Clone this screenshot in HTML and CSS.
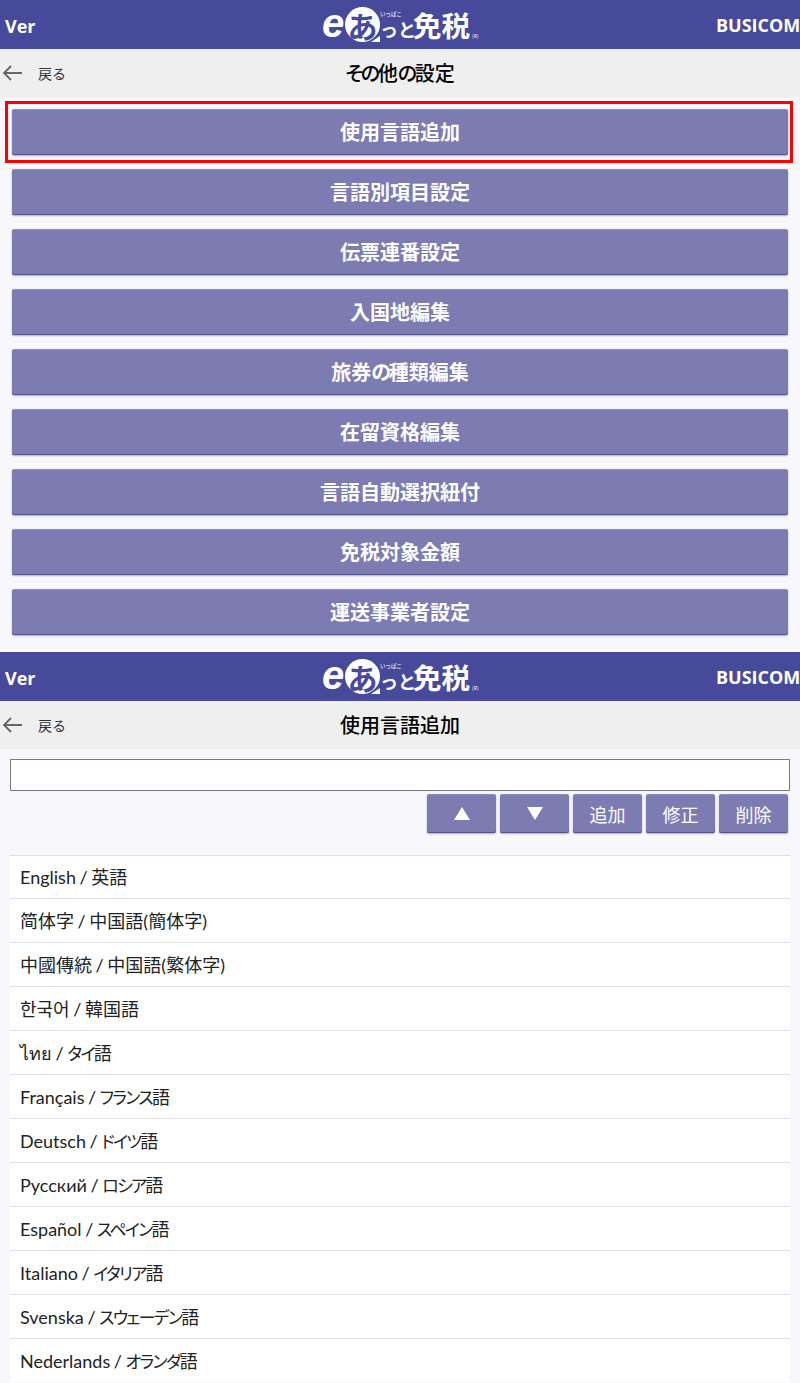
FILE: index.html
```html
<!DOCTYPE html>
<html lang="ja">
<head>
    <meta charset="UTF-8">
    <meta name="viewport" content="width=device-width, initial-scale=1.0">
    <title>その他の設定</title>
    <link rel="stylesheet" href="styles.css">
</head>
<body>

<!-- その他の設定 -->
<section class="screen screen-menu">
    <header class="app-header">
        <span class="ver">Ver</span>
        <div class="logo">
            <span class="logo-e">e</span>
            <span class="logo-bubble">あ</span>
            <span class="logo-small">いっぱこ</span>
            <span class="logo-rest">っと</span>
            <span class="logo-main">免税</span>
            <span class="logo-mark">(R)</span>
        </div>
        <span class="brand">BUSICOM</span>
    </header>
    <div class="sub-header">
        <a class="back" href="#">
            <svg class="back-icon" width="20" height="16" viewBox="0 0 20 16"><path d="M9 1 2 8l7 7M2 8h18" fill="none" stroke="#666" stroke-width="1.8"/></svg>
            <span>戻る</span>
        </a>
        <h1 class="page-title"><span class="kana">その</span>他<span class="kana">の</span>設定</h1>
    </div>
    <div class="menu">
        <div class="menu-item selected"><button class="menu-btn">使用言語追加</button></div>
        <div class="menu-item"><button class="menu-btn">言語別項目設定</button></div>
        <div class="menu-item"><button class="menu-btn">伝票連番設定</button></div>
        <div class="menu-item"><button class="menu-btn">入国地編集</button></div>
        <div class="menu-item"><button class="menu-btn">旅券<span class="kana">の</span>種類編集</button></div>
        <div class="menu-item"><button class="menu-btn">在留資格編集</button></div>
        <div class="menu-item"><button class="menu-btn">言語自動選択紐付</button></div>
        <div class="menu-item"><button class="menu-btn">免税対象金額</button></div>
        <div class="menu-item"><button class="menu-btn">運送事業者設定</button></div>
    </div>
</section>

<!-- 使用言語追加 -->
<section class="screen">
    <header class="app-header">
        <span class="ver">Ver</span>
        <div class="logo">
            <span class="logo-e">e</span>
            <span class="logo-bubble">あ</span>
            <span class="logo-small">いっぱこ</span>
            <span class="logo-rest">っと</span>
            <span class="logo-main">免税</span>
            <span class="logo-mark">(R)</span>
        </div>
        <span class="brand">BUSICOM</span>
    </header>
    <div class="sub-header">
        <a class="back" href="#">
            <svg class="back-icon" width="20" height="16" viewBox="0 0 20 16"><path d="M9 1 2 8l7 7M2 8h18" fill="none" stroke="#666" stroke-width="1.8"/></svg>
            <span>戻る</span>
        </a>
        <h1 class="page-title">使用言語追加</h1>
    </div>
    <div class="editor">
        <input class="lang-input" type="text">
        <div class="tools">
            <button class="tool-btn"><span class="tri-up"></span></button>
            <button class="tool-btn"><span class="tri-down"></span></button>
            <button class="tool-btn">追加</button>
            <button class="tool-btn">修正</button>
            <button class="tool-btn">削除</button>
        </div>
    </div>
    <ul class="lang-list">
        <li>English / 英語</li>
        <li>简体字 / 中国語(簡体字)</li>
        <li>中國傳統 / 中国語(繁体字)</li>
        <li>한국어 / 韓国語</li>
        <li>ไทย / <span class="kana">タイ</span>語</li>
        <li>Français / <span class="kana">フランス</span>語</li>
        <li>Deutsch / <span class="kana">ドイツ</span>語</li>
        <li>Русский / <span class="kana">ロシア</span>語</li>
        <li>Español / <span class="kana">スペイン</span>語</li>
        <li>Italiano / <span class="kana">イタリア</span>語</li>
        <li>Svenska / <span class="kana">スウェーデン</span>語</li>
        <li>Nederlands / <span class="kana">オランダ</span>語</li>
    </ul>
</section>

</body>
</html>
```

FILE: styles.css
```css
:root {
    --header-color: #47499b;
    --button-color: #7c7bb2;
    --sub-header-color: #efefef;
    --page-color: #f7f7fc;
    --line-color: #e0e0e0;
}

*, *::before, *::after {
    box-sizing: border-box;
}

html, body {
    height: 1383px;
    overflow: hidden;
}

body {
    margin: 0;
    background-color: var(--page-color);
    color: #222222;
    font-family: 'Open Sans', 'Noto Sans', 'Noto Sans CJK JP', sans-serif;
    font-feature-settings: 'palt';
}

/* かなは本物より幅が広いので詰める */
.kana {
    letter-spacing: -0.12em;
}

.screen-menu {
    height: 652px;
}

.app-header {
    height: 49px;
    background-color: var(--header-color);
    color: #ffffff;
    display: flex;
    align-items: center;
    justify-content: space-between;
    padding-left: 5px;
    position: relative;
    overflow: hidden;
}

.ver {
    font-size: 18px;
    font-weight: 700;
    padding-top: 2px;
}

.brand {
    font-size: 18px;
    font-weight: 700;
    width: 84px;
    white-space: nowrap;
}

.logo {
    position: absolute;
    left: 322px;
    top: 0;
    height: 49px;
    width: 160px;
    display: flex;
    align-items: center;
    font-family: 'Noto Sans CJK JP', sans-serif;
    font-feature-settings: normal;
    font-weight: 700;
    line-height: 1;
}

.logo-e {
    font-family: 'Liberation Sans', sans-serif;
    font-size: 40px;
    font-weight: 700;
    font-style: italic;
    width: 23px;
    margin-top: -3px;
}

.logo-bubble {
    width: 35px;
    height: 35px;
    border-radius: 50%;
    background-color: #ffffff;
    color: var(--header-color);
    font-size: 30px;
    display: flex;
    align-items: center;
    justify-content: center;
    position: relative;
}

/* 吹き出しの先 */
.logo-bubble::after {
    content: '';
    position: absolute;
    right: 0;
    bottom: 0;
    border-left: 9px solid transparent;
    border-bottom: 6px solid #ffffff;
}

.logo-small {
    position: absolute;
    left: 58px;
    top: 12px;
    font-size: 5.5px;
    font-weight: 400;
}

.logo-rest {
    font-size: 18px;
    margin-top: 9px;
    width: 33px;
    white-space: nowrap;
}

.logo-main {
    font-size: 28.5px;
    margin-top: 1px;
    white-space: nowrap;
}

.logo-mark {
    font-size: 5px;
    font-weight: 400;
    margin: 22px 0 0 2px;
}

.sub-header {
    height: 48px;
    background-color: var(--sub-header-color);
    display: flex;
    align-items: center;
    justify-content: center;
    position: relative;
}

.back {
    position: absolute;
    left: 2px;
    top: 14px;
    display: flex;
    align-items: center;
    gap: 16px;
    color: #333333;
    font-size: 14px;
    font-feature-settings: normal;
    text-decoration: none;
}

.page-title {
    margin: 0 0 2px;
    color: #000000;
    font-size: 20px;
    font-weight: 500;
}

.menu {
    padding-top: 4px;
}

.menu-item {
    height: 62px;
    margin-bottom: -2px;
    padding: 8px 12px;
}

.menu-item.selected {
    border: 3px solid #ff0000;
    margin: 0 7px -2px 5px;
    padding: 5px 2px 5px 4px;
}

.menu-btn, .tool-btn {
    border: none;
    border-radius: 2px;
    background-color: var(--button-color);
    color: #ffffff;
    font-family: inherit;
    font-feature-settings: inherit;
    box-shadow: 0 1px 2px rgba(0, 0, 0, 0.3), inset 0 -1px 0 rgba(60, 60, 110, 0.6), inset 0 1px 0 rgba(255, 255, 255, 0.15);
    padding: 0;
}

.menu-btn {
    display: block;
    width: 100%;
    height: 46px;
    padding-bottom: 2px;
    font-size: 20px;
    font-weight: 700;
}

.editor {
    padding: 10px 10px 0;
}

.lang-input {
    display: block;
    width: 780px;
    height: 32px;
    background-color: #ffffff;
    border: 1px solid #7a7a7a;
    outline: none;
}

.tools {
    display: flex;
    justify-content: flex-end;
    gap: 4px;
    margin-top: 3px;
    padding-right: 2px;
}

.tool-btn {
    width: 69px;
    height: 39px;
    font-size: 18px;
    display: flex;
    align-items: center;
    justify-content: center;
}

.tri-up, .tri-down {
    width: 0;
    height: 0;
    border-left: 8px solid transparent;
    border-right: 8px solid transparent;
}

.tri-up {
    border-bottom: 13px solid #ffffff;
}

.tri-down {
    border-top: 13px solid #ffffff;
}

.lang-list {
    list-style: none;
    margin: 22px 10px 0;
    padding: 0;
}

.lang-list li {
    height: 44px;
    background-color: #ffffff;
    border-top: 1px solid var(--line-color);
    padding-left: 10px;
    font-family: 'Lato', 'Noto Sans', 'Noto Sans CJK JP', sans-serif;
    font-size: 18px;
    line-height: 45px;
    word-spacing: -1px;
    color: #222222;
}

.lang-list li:first-child {
    height: 43px;
    line-height: 43px;
}

.lang-list .kana {
    font-size: 17px;
    letter-spacing: -0.1em;
}
```
